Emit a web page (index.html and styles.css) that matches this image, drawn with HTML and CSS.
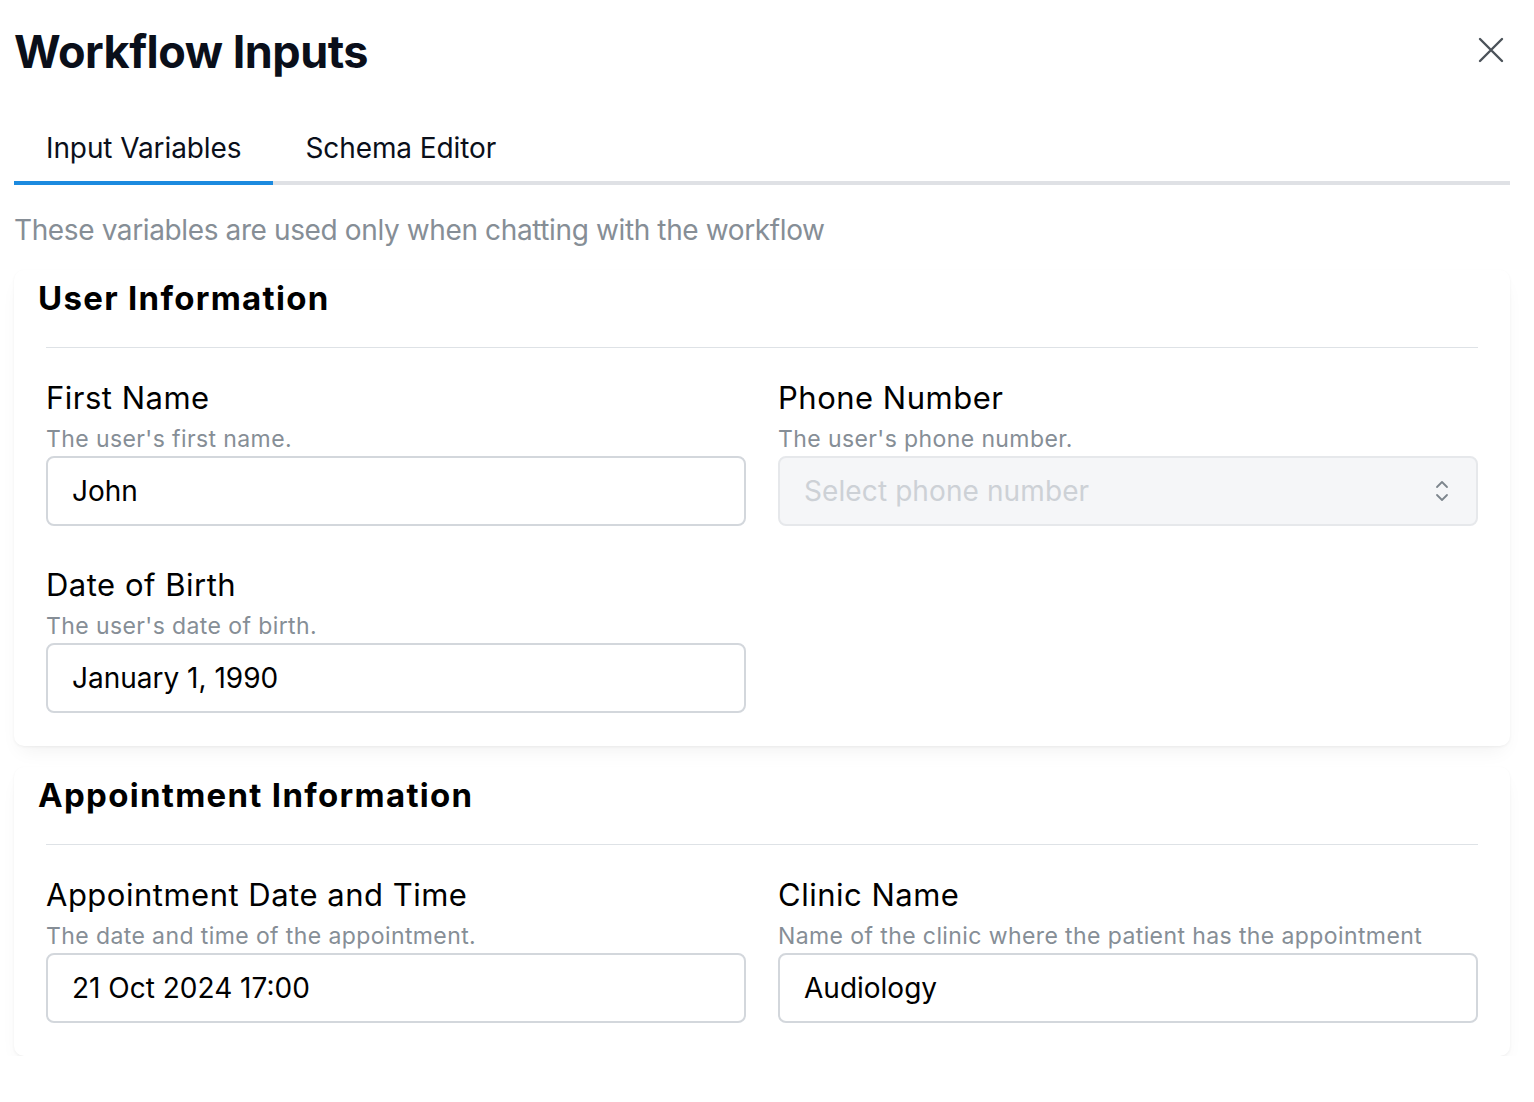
FILE: index.html
```html
<!DOCTYPE html>
<html lang="en">
<head>
<meta charset="utf-8">
<title>Workflow Inputs</title>
<link rel="stylesheet" href="styles.css">
</head>
<body>
<div class="modal">
  <header class="header">
    <h1 class="title">Workflow Inputs</h1>
    <button class="close" aria-label="Close">
      <svg width="28" height="28" viewBox="0 0 28 28" fill="none" stroke="currentColor" stroke-width="2.4" stroke-linecap="round"><path d="M3 3L25 25M25 3L3 25"/></svg>
    </button>
  </header>

  <nav class="tabs">
    <div class="tab active">Input Variables</div>
    <div class="tab">Schema Editor</div>
  </nav>

  <p class="intro">These variables are used only when chatting with the workflow</p>

  <section class="card">
    <h2 class="card-title">User Information</h2>
    <div class="card-body">
      <div class="grid">
        <div class="field">
          <div class="label">First Name</div>
          <div class="desc">The user's first name.</div>
          <div class="input">John</div>
        </div>
        <div class="field">
          <div class="label">Phone Number</div>
          <div class="desc">The user's phone number.</div>
          <div class="input select disabled">
            <span class="placeholder">Select phone number</span>
            <svg class="chev" width="16" height="24" viewBox="0 0 16 24" fill="none" stroke="currentColor" stroke-width="1.8" stroke-linecap="round" stroke-linejoin="round"><path d="M3 8L8 3L13 8M3 16L8 21L13 16"/></svg>
          </div>
        </div>
        <div class="field">
          <div class="label">Date of Birth</div>
          <div class="desc">The user's date of birth.</div>
          <div class="input">January 1, 1990</div>
        </div>
      </div>
    </div>
  </section>

  <section class="card">
    <h2 class="card-title">Appointment Information</h2>
    <div class="card-body">
      <div class="grid">
        <div class="field">
          <div class="label">Appointment Date and Time</div>
          <div class="desc">The date and time of the appointment.</div>
          <div class="input">21 Oct 2024 17:00</div>
        </div>
        <div class="field">
          <div class="label">Clinic Name</div>
          <div class="desc">Name of the clinic where the patient has the appointment</div>
          <div class="input">Audiology</div>
        </div>
      </div>
    </div>
  </section>
</div>
</body>
</html>
```

FILE: styles.css
```css
* { box-sizing: border-box; }

html, body {
  margin: 0;
  padding: 0;
  background: #ffffff;
}

body {
  font-family: "Inter", "Noto Sans", sans-serif;
  color: #000000;
  padding: 0 24px 0 14px;
}

.modal {
  width: 1496px;
}

.header {
  display: flex;
  align-items: center;
  justify-content: space-between;
  padding-top: 24px;
}

.title {
  margin: 0;
  font-size: 45px;
  line-height: 56px;
  font-weight: 700;
  letter-spacing: -0.5px;
  color: #0a0f1a;
}

.close {
  border: 0;
  background: transparent;
  padding: 0;
  margin-right: 4px;
  margin-top: -4px;
  color: #4b5259;
  display: flex;
  align-items: center;
  justify-content: center;
  width: 30px;
  height: 30px;
}

.tabs {
  display: flex;
  margin-top: 35px;
  border-bottom: 4px solid #dfe1e5;
}

.tab {
  padding: 16px 32px;
  font-size: 28px;
  line-height: 34px;
  letter-spacing: -0.1px;
  color: #0a0f1a;
  margin-bottom: -4px;
  border-bottom: 4px solid transparent;
}

.tab.active {
  border-bottom-color: #1c8adf;
}

.intro {
  margin: 25px 0 0;
  font-size: 28px;
  line-height: 40px;
  letter-spacing: -0.38px;
  color: #868e96;
}

.card {
  margin-top: 20px;
  background: #ffffff;
  border-radius: 10px;
  box-shadow: 0 1px 3px rgba(0, 0, 0, 0.05), 0 10px 20px -6px rgba(0, 0, 0, 0.06);
  padding-bottom: 33px;
}

.card + .card {
  margin-top: 21px;
}

.card-title {
  margin: 0;
  padding: 8px 24px 0;
  font-size: 33px;
  line-height: 40px;
  font-weight: 700;
  letter-spacing: 1.3px;
  color: #000000;
}

.card-body {
  margin: 29px 32px 0;
  border-top: 1px solid #dee2e6;
  padding-top: 30px;
}

.grid {
  display: grid;
  grid-template-columns: 1fr 1fr;
  column-gap: 32px;
  row-gap: 39px;
}

.label {
  font-size: 31px;
  line-height: 40px;
  letter-spacing: 0.5px;
  color: #000000;
}

.desc {
  margin-top: 5px;
  font-size: 23px;
  line-height: 32px;
  letter-spacing: 0.4px;
  color: #868e96;
  white-space: nowrap;
}

.input {
  margin-top: 1px;
  height: 70px;
  border: 2px solid #d3d7dc;
  border-radius: 8px;
  padding: 0 24px;
  display: flex;
  align-items: center;
  font-size: 28px;
  letter-spacing: 0;
  color: #000000;
}

.input.select {
  justify-content: space-between;
}

.input.disabled {
  background: #f5f6f8;
  border-color: #e6e8eb;
}

.placeholder {
  color: #cdd1d6;
  letter-spacing: 0.1px;
}

.chev {
  color: #7d858d;
  margin-right: 2px;
}
```
